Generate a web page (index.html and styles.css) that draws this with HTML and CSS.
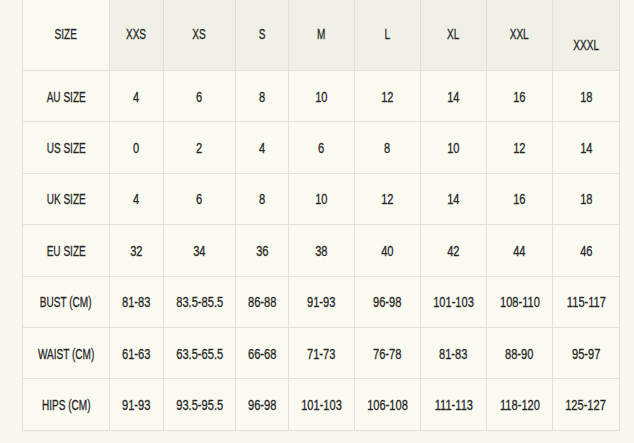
FILE: index.html
```html
<!DOCTYPE html>
<html>
<head>
<meta charset="utf-8">
<link rel="stylesheet" href="styles.css">
</head>
<body>
<div class="wrap">
<table class="size-table">
  <colgroup>
    <col class="c-label"><col class="c-xxs"><col class="c-xs"><col class="c-s"><col class="c-m"><col class="c-l"><col class="c-xl"><col class="c-xxl"><col class="c-xxxl">
  </colgroup>
  <thead>
    <tr>
      <th class="label"><span class="t">SIZE</span></th>
      <th><span class="t">XXS</span></th><th><span class="t">XS</span></th><th><span class="t">S</span></th><th><span class="t">M</span></th><th><span class="t">L</span></th><th><span class="t">XL</span></th><th><span class="t">XXL</span></th><th><span class="t low">XXXL</span></th>
    </tr>
  </thead>
  <tbody>
    <tr><td class="label"><span class="t">AU SIZE</span></td><td><span class="n">4</span></td><td><span class="n">6</span></td><td><span class="n">8</span></td><td><span class="n">10</span></td><td><span class="n">12</span></td><td><span class="n">14</span></td><td><span class="n">16</span></td><td><span class="n">18</span></td></tr>
    <tr><td class="label"><span class="t">US SIZE</span></td><td><span class="n">0</span></td><td><span class="n">2</span></td><td><span class="n">4</span></td><td><span class="n">6</span></td><td><span class="n">8</span></td><td><span class="n">10</span></td><td><span class="n">12</span></td><td><span class="n">14</span></td></tr>
    <tr><td class="label"><span class="t">UK SIZE</span></td><td><span class="n">4</span></td><td><span class="n">6</span></td><td><span class="n">8</span></td><td><span class="n">10</span></td><td><span class="n">12</span></td><td><span class="n">14</span></td><td><span class="n">16</span></td><td><span class="n">18</span></td></tr>
    <tr><td class="label"><span class="t">EU SIZE</span></td><td><span class="n">32</span></td><td><span class="n">34</span></td><td><span class="n">36</span></td><td><span class="n">38</span></td><td><span class="n">40</span></td><td><span class="n">42</span></td><td><span class="n">44</span></td><td><span class="n">46</span></td></tr>
    <tr><td class="label"><span class="t">BUST (CM)</span></td><td><span class="n">81-83</span></td><td><span class="n">83.5-85.5</span></td><td><span class="n">86-88</span></td><td><span class="n">91-93</span></td><td><span class="n">96-98</span></td><td><span class="n">101-103</span></td><td><span class="n">108-110</span></td><td><span class="n">115-117</span></td></tr>
    <tr><td class="label"><span class="t">WAIST (CM)</span></td><td><span class="n">61-63</span></td><td><span class="n">63.5-65.5</span></td><td><span class="n">66-68</span></td><td><span class="n">71-73</span></td><td><span class="n">76-78</span></td><td><span class="n">81-83</span></td><td><span class="n">88-90</span></td><td><span class="n">95-97</span></td></tr>
    <tr><td class="label"><span class="t">HIPS (CM)</span></td><td><span class="n">91-93</span></td><td><span class="n">93.5-95.5</span></td><td><span class="n">96-98</span></td><td><span class="n">101-103</span></td><td><span class="n">106-108</span></td><td><span class="n">111-113</span></td><td><span class="n">118-120</span></td><td><span class="n">125-127</span></td></tr>
  </tbody>
</table>
</div>
</body>
</html>
```

FILE: styles.css
```css
html, body {
  margin: 0;
  padding: 0;
  background: #f8f8ef;
}
.wrap {
  padding: 0 16px 0 22px;
}
.size-table {
  border-collapse: collapse;
  table-layout: fixed;
  width: 597px;
  font-family: "Liberation Sans", Arial, sans-serif;
  font-size: 15px;
  line-height: 16px;
  color: #262626;
  background: #fafaf1;
}
.c-label { width: 87px; }
.c-xxs { width: 54px; }
.c-xs { width: 72px; }
.c-s { width: 53px; }
.c-m { width: 66px; }
.c-l { width: 66px; }
.c-xl { width: 66px; }
.c-xxl { width: 66px; }
.c-xxxl { width: 67px; }
.size-table th,
.size-table td {
  border: 1px solid #e2e1d7;
  text-align: center;
  vertical-align: middle;
  padding: 0;
  font-weight: normal;
  white-space: nowrap;
}
.size-table thead th {
  height: 70px;
  background: #f1f0e6;
  border-top: none;
}
.size-table thead th.label {
  background: #fafaf1;
}
.size-table tbody td {
  height: 50.4px;
}
.t,
.n {
  display: inline-block;
  transform-origin: center;
  -webkit-text-stroke: 0.3px #262626;
  padding-top: 1px;
}
.size-table thead .t {
  padding-top: 0;
  padding-bottom: 2px;
}
.t {
  transform: scaleX(0.67);
}
.n {
  transform: scaleX(0.74);
}
.size-table thead .low {
  margin-top: 20px;
  padding-bottom: 0;
}
```
